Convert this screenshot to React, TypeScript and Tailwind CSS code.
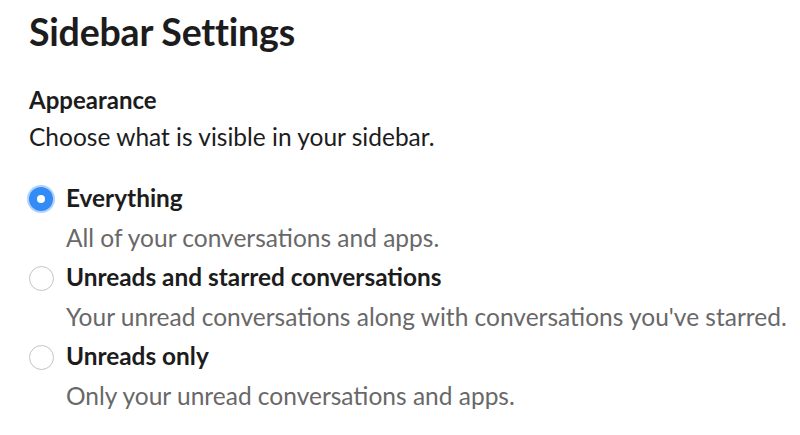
import React, {useState} from 'react';

const options = [
    {id: 'everything', label: 'Everything', description: 'All of your conversations and apps.'},
    {id: 'unreads-starred', label: 'Unreads and starred conversations', description: "Your unread conversations along with conversations you've starred."},
    {id: 'unreads', label: 'Unreads only', description: 'Only your unread conversations and apps.'},
];

const App = () => {
    const [selected, setSelected] = useState('everything');

    return (
        <div className="w-[800px] h-[435px] bg-white pl-[29px] pt-[8px] text-[#1d1c1d] font-['Lato',sans-serif] overflow-hidden">
            <h1 className="text-[37.5px] font-bold leading-[48px] tracking-[-0.2px]">Sidebar Settings</h1>
            <div className="mt-[26px]">
                <div className="text-[24px] font-bold leading-[36px]">Appearance</div>
                <div className="text-[24.5px] leading-[38px]">Choose what is visible in your sidebar.</div>
            </div>
            <div className="mt-[22px] flex flex-col">
                {options.map((option) => {
                    const checked = selected === option.id;
                    return (
                        <label key={option.id} className="flex flex-row cursor-pointer" onClick={() => setSelected(option.id)}>
                            <div className="w-[37px] h-[42px] flex items-center">
                                {checked ? (
                                    <span className="w-[24px] h-[24px] rounded-full bg-[#338cf5] ring-[2px] ring-[#b3d3fa] flex items-center justify-center">
                                        <span className="w-[8px] h-[8px] rounded-full bg-white"/>
                                    </span>
                                ) : (
                                    <span className="w-[25px] h-[25px] rounded-full border border-[#c4c4c4] bg-white"/>
                                )}
                            </div>
                            <div className="flex flex-col">
                                <div className="text-[24.4px] font-bold leading-[39.5px]">{option.label}</div>
                                <div className="text-[24.5px] leading-[39.5px] text-[#696869]">{option.description}</div>
                            </div>
                        </label>
                    );
                })}
            </div>
        </div>
    );
};

export default App;
